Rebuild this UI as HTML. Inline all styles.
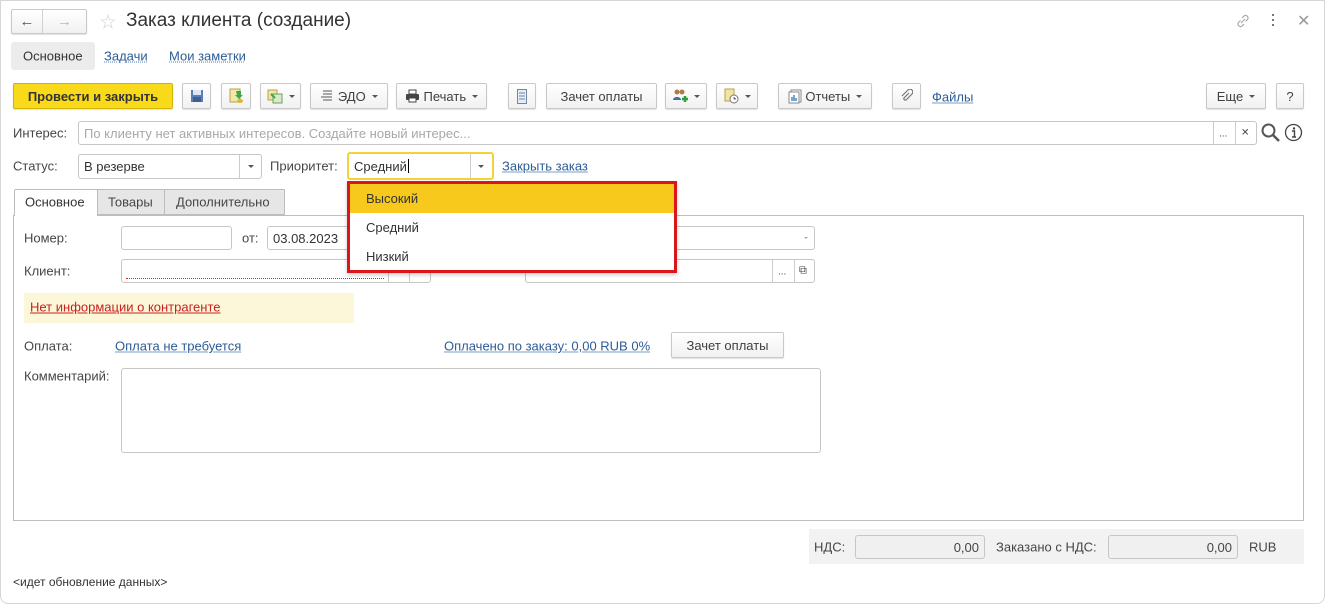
<!DOCTYPE html>
<html><head><meta charset="utf-8">
<style>
*{box-sizing:border-box;margin:0;padding:0}
body{width:1325px;height:604px;background:#fff;font-family:"Liberation Sans",sans-serif;font-size:13px;color:#464646;position:relative;overflow:hidden}
.a{position:absolute}
.btn{position:absolute;height:26px;border:1px solid #c8c8c8;border-radius:2px;background:linear-gradient(#fff,#f1f1f1);box-shadow:0 1px 1px rgba(0,0,0,.12);display:flex;align-items:center;justify-content:center;font-size:13px;color:#404040}
.inp{position:absolute;height:24px;border:1px solid #c6c6c6;border-radius:3px;background:#fff;display:flex;align-items:center;padding-left:5px}
.lnk{color:#2c5c96;text-decoration:underline;text-decoration-color:#7a9cc5}
.tri{display:inline-block;width:0;height:0;border-left:3px solid transparent;border-right:3px solid transparent;border-top:3px solid #555;margin-left:6px}
.lbl{position:absolute;transform:translateY(-50%)}
</style></head><body>
<div class="a" style="left:0;top:0;width:1325px;height:604px;border:1px solid #d6d6d6;border-radius:0 0 8px 8px"></div>

<!-- nav -->
<div class="btn" style="left:11px;top:9px;width:76px;height:25px;padding:0">
 <div style="width:30px;text-align:center;color:#555;font-size:15px">&#8592;</div>
 <div style="width:1px;height:23px;background:#d0d0d0"></div>
 <div style="flex:1;text-align:center;color:#bbb;font-size:15px">&#8594;</div>
</div>
<div class="lbl" style="left:99px;top:22px;color:#cfcfcf;font-size:20px">&#9734;</div>
<div class="lbl" style="left:126px;top:21px;font-size:19px;color:#333">Заказ клиента (создание)</div>
<svg class="a" style="left:1235px;top:13px" width="16" height="16" viewBox="0 0 16 16"><path d="M6 10l4-4M7 5l2-2a2.5 2.5 0 013.5 3.5l-2 2M9 11l-2 2a2.5 2.5 0 01-3.5-3.5l2-2" stroke="#aaa" fill="none" stroke-width="1.2"/></svg>
<div class="a" style="left:1272px;top:14px;width:3px">
<div style="width:2px;height:2px;background:#777;margin-bottom:3px"></div><div style="width:2px;height:2px;background:#777;margin-bottom:3px"></div><div style="width:2px;height:2px;background:#777"></div></div>
<div class="lbl" style="left:1297px;top:21px;color:#999;font-size:16px">&#10005;</div>

<!-- page tabs -->
<div class="a" style="left:11px;top:42px;width:84px;height:28px;background:#ececec;border-radius:3px"></div>
<div class="lbl" style="left:23px;top:56px;color:#333">Основное</div>
<div class="lbl lnk" style="left:104px;top:56px;text-decoration-style:dotted">Задачи</div>
<div class="lbl lnk" style="left:169px;top:56px;text-decoration-style:dotted">Мои заметки</div>

<!-- toolbar -->
<div class="btn" style="left:13px;top:83px;width:160px;background:#f9da1a;border-color:#d5b400;color:#333;font-weight:bold;font-size:13px">Провести и закрыть</div>
<div class="btn" style="left:182px;top:83px;width:29px"><svg width="14" height="14"><rect x="1" y="1" width="12" height="12" fill="#5a7fb5"/><rect x="3" y="1" width="8" height="5" fill="#dde6f2"/><rect x="3" y="8" width="8" height="5" fill="#3d5f91"/></svg></div>
<div class="btn" style="left:221px;top:83px;width:30px"><svg width="16" height="16"><rect x="2" y="1" width="10" height="13" fill="#f4e8a8" stroke="#b9a24a"/><path d="M8 3h5v4h2l-4 4-4-4h2z" fill="#3da84a"/><ellipse cx="12" cy="13" rx="3" ry="2" fill="#e0b530"/></svg></div>
<div class="btn" style="left:260px;top:83px;width:41px"><svg width="16" height="16"><rect x="1" y="2" width="9" height="10" fill="#f1e4a6" stroke="#b9a24a"/><rect x="6" y="6" width="9" height="9" fill="#d9e9c9" stroke="#6aa35a"/><path d="M4 6l4 4" stroke="#3da84a" stroke-width="2"/></svg><span class="tri"></span></div>
<div class="btn" style="left:310px;top:83px;width:78px"><svg width="14" height="14"><path d="M3 2h9M3 5h9M1 8h11M3 11h9" stroke="#777" stroke-width="1.2"/></svg>&nbsp;ЭДО<span class="tri"></span></div>
<div class="btn" style="left:396px;top:83px;width:91px"><svg width="15" height="14"><rect x="4" y="1" width="7" height="4" fill="#fff" stroke="#444"/><rect x="1" y="5" width="13" height="6" rx="1" fill="#444"/><rect x="4" y="9" width="7" height="4" fill="#fff" stroke="#444"/></svg>&nbsp;Печать<span class="tri"></span></div>
<div class="btn" style="left:508px;top:83px;width:28px"><svg width="10" height="15"><rect x="0.5" y="0.5" width="9" height="14" fill="#e7edf6" stroke="#6f86a8"/><path d="M2 4h6M2 7h6M2 10h6" stroke="#6f86a8"/></svg></div>
<div class="btn" style="left:546px;top:83px;width:111px">Зачет оплаты</div>
<div class="btn" style="left:665px;top:83px;width:42px"><svg width="16" height="16"><circle cx="5" cy="4" r="2.5" fill="#b07a4a"/><path d="M1 12c0-4 8-4 8 0z" fill="#4a6a9a"/><circle cx="10" cy="4" r="2.5" fill="#b07a4a"/><path d="M10 11h6M13 8v6" stroke="#2da03a" stroke-width="2.5"/></svg><span class="tri"></span></div>
<div class="btn" style="left:716px;top:83px;width:42px"><svg width="16" height="16"><rect x="2" y="1" width="9" height="12" fill="#f1e4a6" stroke="#b9a24a"/><circle cx="11" cy="11" r="4" fill="#fff" stroke="#777"/><path d="M11 9v2h2" stroke="#777"/></svg><span class="tri"></span></div>
<div class="btn" style="left:778px;top:83px;width:94px"><svg width="14" height="15"><rect x="3" y="1" width="10" height="12" fill="#fff" stroke="#888"/><rect x="1" y="3" width="10" height="11" fill="#fff" stroke="#888"/><path d="M4 12V8M6 12V6M8 12V9" stroke="#3a7fc0" stroke-width="1.4"/></svg>&nbsp;Отчеты<span class="tri"></span></div>
<div class="btn" style="left:892px;top:83px;width:29px"><svg width="12" height="14"><path d="M8 4l-5 5a1.5 1.5 0 002 2l6-6a2.5 2.5 0 00-4-4L1 7" stroke="#777" fill="none" stroke-width="1.2"/></svg></div>
<div class="lbl lnk" style="left:932px;top:97px">Файлы</div>
<div class="btn" style="left:1206px;top:83px;width:60px">Еще<span class="tri"></span></div>
<div class="btn" style="left:1276px;top:83px;width:28px">?</div>

<!-- interest -->
<div class="lbl" style="left:13px;top:133px">Интерес:</div>
<div class="inp" style="left:78px;top:121px;width:1179px;color:#a8a8a8">По клиенту нет активных интересов. Создайте новый интерес...</div>
<div class="a" style="left:1213px;top:122px;width:1px;height:22px;background:#ccc"></div>
<div class="a" style="left:1235px;top:122px;width:1px;height:22px;background:#ccc"></div>
<div class="lbl" style="left:1219px;top:134px;font-size:10px">...</div>
<div class="lbl" style="left:1241px;top:133px;font-size:10px">&#10005;</div>
<svg class="a" style="left:1260px;top:122px" width="22" height="22"><circle cx="8.5" cy="8.5" r="6" stroke="#555" stroke-width="2" fill="none"/><path d="M13 13l6 6" stroke="#555" stroke-width="2.5"/></svg>
<svg class="a" style="left:1284px;top:123px" width="19" height="19"><circle cx="9.5" cy="9.5" r="8" stroke="#444" stroke-width="1.3" fill="none"/><circle cx="10" cy="5.5" r="1.2" fill="#444"/><path d="M8 8h2.5v6M8 14h4" stroke="#444" stroke-width="1.4" fill="none"/></svg>

<!-- status row -->
<div class="lbl" style="left:13px;top:166px">Статус:</div>
<div class="inp" style="left:78px;top:154px;width:184px;height:25px;color:#333">В резерве</div>
<div class="a" style="left:239px;top:155px;width:1px;height:23px;background:#ccc"></div>
<div class="a" style="left:248px;top:165px;border-left:3px solid transparent;border-right:3px solid transparent;border-top:3px solid #555"></div>
<div class="lbl" style="left:270px;top:166px">Приоритет:</div>
<div class="inp" style="left:347px;top:152px;width:147px;height:28px;border:2px solid #f2d33a;color:#333">Средний<span style="border-left:1px solid #000;height:14px;margin-left:1px"></span></div>
<div class="a" style="left:470px;top:154px;width:1px;height:24px;background:#ccc"></div>
<div class="a" style="left:478px;top:165px;border-left:3px solid transparent;border-right:3px solid transparent;border-top:3px solid #555"></div>
<div class="lbl lnk" style="left:502px;top:166px">Закрыть заказ</div>

<!-- tabs -->
<div class="a" style="left:13px;top:215px;width:1291px;height:306px;border:1px solid #bdbdbd"></div>
<div class="a" style="left:14px;top:189px;width:84px;height:27px;background:#fff;border:1px solid #bdbdbd;border-bottom:none;border-radius:2px 2px 0 0"></div>
<div class="lbl" style="left:25px;top:202px;color:#333">Основное</div>
<div class="a" style="left:97px;top:189px;width:68px;height:26px;background:#e6e6e6;border:1px solid #bdbdbd"></div>
<div class="lbl" style="left:108px;top:202px">Товары</div>
<div class="a" style="left:164px;top:189px;width:121px;height:26px;background:#e6e6e6;border:1px solid #bdbdbd"></div>
<div class="lbl" style="left:176px;top:202px">Дополнительно</div>

<div class="lbl" style="left:24px;top:238px">Номер:</div>
<div class="inp" style="left:121px;top:226px;width:111px"></div>
<div class="lbl" style="left:242px;top:238px">от:</div>
<div class="inp" style="left:267px;top:226px;width:90px;color:#333">03.08.2023</div>
<div class="inp" style="left:525px;top:226px;width:290px"></div>
<div class="a" style="left:804px;top:237px;border-left:2px solid transparent;border-right:2px solid transparent;border-top:2px solid #aaa"></div>

<div class="lbl" style="left:24px;top:271px">Клиент:</div>
<div class="inp" style="left:121px;top:259px;width:310px"></div>
<div class="a" style="left:126px;top:278px;width:258px;border-top:1px dotted #d22"></div>
<div class="a" style="left:388px;top:260px;width:1px;height:22px;background:#ccc"></div>
<div class="a" style="left:409px;top:260px;width:1px;height:22px;background:#ccc"></div>
<div class="inp" style="left:525px;top:259px;width:290px"></div>
<div class="a" style="left:772px;top:260px;width:1px;height:22px;background:#ccc"></div>
<div class="a" style="left:794px;top:260px;width:1px;height:22px;background:#ccc"></div>
<div class="lbl" style="left:778px;top:272px;font-size:10px">...</div>
<div class="lbl" style="left:799px;top:271px;font-size:11px">&#10697;</div>

<div class="a" style="left:24px;top:293px;width:330px;height:30px;background:#fdf7da"></div>
<div class="lbl" style="left:30px;top:307px;color:#c8201e;text-decoration:underline">Нет информации о контрагенте</div>

<div class="lbl" style="left:24px;top:346px">Оплата:</div>
<div class="lbl lnk" style="left:115px;top:346px">Оплата не требуется</div>
<div class="lbl lnk" style="left:444px;top:346px">Оплачено по заказу: 0,00 RUB 0%</div>
<div class="btn" style="left:671px;top:332px;width:113px">Зачет оплаты</div>

<div class="lbl" style="left:24px;top:376px">Комментарий:</div>
<div class="inp" style="left:121px;top:368px;width:700px;height:85px"></div>

<!-- footer -->
<div class="a" style="left:809px;top:529px;width:495px;height:35px;background:#f2f2f2"></div>
<div class="lbl" style="left:814px;top:547px">НДС:</div>
<div class="inp" style="left:855px;top:535px;width:130px;background:#f0f0f0;justify-content:flex-end;padding-right:5px">0,00</div>
<div class="lbl" style="left:996px;top:547px">Заказано с НДС:</div>
<div class="inp" style="left:1108px;top:535px;width:130px;background:#f0f0f0;justify-content:flex-end;padding-right:5px">0,00</div>
<div class="lbl" style="left:1249px;top:547px">RUB</div>

<div class="lbl" style="left:13px;top:582px;font-size:12px;color:#333">&lt;идет обновление данных&gt;</div>

<!-- dropdown -->
<div class="a" style="left:347px;top:181px;width:330px;height:92px;border:3px solid #d9161c;background:#fff;box-shadow:0 2px 4px rgba(0,0,0,.2)">
 <div style="height:29px;background:#f7c91d;padding-left:16px;line-height:29px;color:#333">Высокий</div>
 <div style="height:29px;padding-left:16px;line-height:29px;color:#333">Средний</div>
 <div style="height:29px;padding-left:16px;line-height:29px;color:#333">Низкий</div>
</div>
</body></html>
